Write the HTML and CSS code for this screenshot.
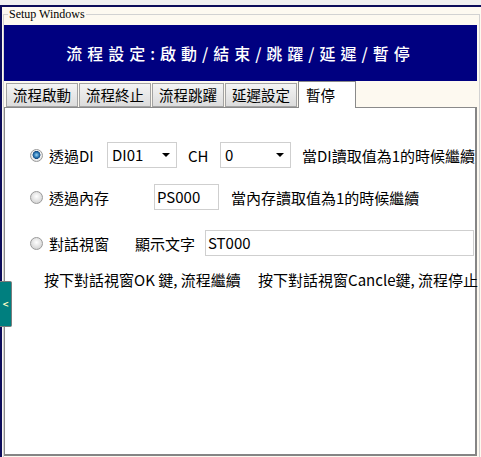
FILE: index.html
```html
<!DOCTYPE html>
<html lang="zh-Hant">
<head>
<meta charset="utf-8">
<title>Setup Windows</title>
<link rel="stylesheet" href="styles.css">
</head>
<body>
<div class="screen">
  <fieldset class="group">
    <legend class="legend">Setup Windows</legend>
    <div class="banner">流程設定:啟動/結束/跳躍/延遲/暫停</div>
    <div class="tabs">
      <div class="tab">流程啟動</div>
      <div class="tab">流程終止</div>
      <div class="tab">流程跳躍</div>
      <div class="tab">延遲設定</div>
      <div class="tab active">暫停</div>
    </div>
    <div class="panel">
      <div class="row row-di">
        <span class="radio checked"></span>
        <span class="lbl lbl-di">透過DI</span>
        <div class="combo combo-di"><span>DI01</span><span class="caret"></span></div>
        <span class="lbl lbl-ch">CH</span>
        <div class="combo combo-ch"><span>0</span><span class="caret"></span></div>
        <span class="note note-di">當DI讀取值為1的時候繼續</span>
      </div>
      <div class="row row-mem">
        <span class="radio"></span>
        <span class="lbl lbl-mem">透過內存</span>
        <div class="field field-ps">PS000</div>
        <span class="note note-mem">當內存讀取值為1的時候繼續</span>
      </div>
      <div class="row row-dlg">
        <span class="radio"></span>
        <span class="lbl lbl-dlg">對話視窗</span>
        <span class="lbl lbl-show">顯示文字</span>
        <div class="field field-st">ST000</div>
      </div>
      <div class="hint">
        <span>按下對話視窗OK 鍵, 流程繼續</span>
        <span class="hint-2">按下對話視窗Cancle鍵, 流程停止</span>
      </div>
    </div>
  </fieldset>
</div>
<div class="side-btn">&lt;</div>
</body>
</html>
```
FILE: styles.css
```css
html, body {
  margin: 0;
  padding: 0;
}
body {
  background: #f0f0f0;
  width: 481px;
  height: 457px;
  overflow: hidden;
  font-family: "Noto Sans CJK TC", "Noto Sans", sans-serif;
  color: #000;
}
.screen {
  margin-top: 5px;
  border-top: 2px solid #0c0c5a;
  border-left: 2px solid #0c0c5a;
  background: #fdf9f0;
  height: 450px;
}
.group {
  margin: 0 0 0 1px;
  padding: 0;
  width: 477px;
  box-sizing: border-box;
  border: 1px solid #d2d2d2;
  border-bottom: none;
  min-inline-size: 0;
  height: 450px;
}
.legend {
  font-family: "Liberation Serif", serif;
  font-size: 12px;
  line-height: 14px;
  padding: 0 1px;
  margin-left: 4px;
}
.banner {
  margin-top: 4px;
  width: 473px;
  height: 56px;
  background: #000080;
  color: #fff;
  display: flex;
  align-items: center;
  justify-content: center;
  font-size: 16px;
  font-weight: 500;
  letter-spacing: 5px;
}
.tabs {
  display: flex;
  align-items: flex-start;
  height: 26px;
  padding-left: 2px;
}
.tab {
  margin-top: 2px;
  height: 24px;
  box-sizing: border-box;
  border: 1px solid #a3a3a3;
  background: linear-gradient(#f4f4f4, #dcdcdc);
  font-size: 14.5px;
  line-height: 22px;
  padding: 0 6px;
  margin-right: 1px;
  white-space: nowrap;
}
.tab.active {
  margin-top: 0;
  height: 27px;
  margin-bottom: -1px;
  background: #fff;
  border-color: #8a8a8a;
  border-bottom: none;
  padding: 2px 20px 0 7px;
  position: relative;
  z-index: 1;
}
.panel {
  width: 473px;
  height: 349px;
  box-sizing: border-box;
  background: #fff;
  border-top: 1px solid #8a8a8a;
  border-left: 1px solid #8a8a8a;
  border-right: 2px solid #858585;
  border-bottom: 2px solid #858585;
  padding-top: 34px;
  font-size: 15px;
}
.row {
  display: flex;
  align-items: center;
  height: 26px;
  padding-left: 25px;
}
.row-mem { margin-top: 16px; }
.row-dlg { margin-top: 20px; }
.radio {
  width: 13px;
  height: 13px;
  box-sizing: border-box;
  border-radius: 50%;
  border: 1px solid #9a9a9a;
  background: radial-gradient(circle at 50% 40%, #ffffff 0%, #e6e6e6 45%, #c8c8c8 100%);
  margin-right: 6px;
  flex: none;
}
.radio.checked {
  background: radial-gradient(circle at 50% 45%, #9fd0ee 0%, #2a7ab8 30%, #184a80 45%, #f2f2f2 52%, #cfcfcf 100%);
}
.lbl { white-space: nowrap; flex: none; }
.lbl-di { width: 58px; }
.lbl-ch { width: 32px; margin-left: 11px; }
.lbl-mem { width: 105px; }
.lbl-dlg { width: 86px; }
.lbl-show { width: 70px; }
.combo {
  height: 26px;
  box-sizing: border-box;
  border: 1px solid #cfcfcf;
  background: #fff;
  display: flex;
  align-items: center;
  justify-content: space-between;
  padding: 0 6px 2px 4px;
  flex: none;
}
.combo-di { width: 70px; }
.combo-ch { width: 71px; }
.caret {
  width: 0;
  height: 0;
  border-left: 4px solid transparent;
  border-right: 4px solid transparent;
  border-top: 4px solid #000;
  margin-top: 2px;
}
.note { white-space: nowrap; margin-left: 11px; }
.note-mem { margin-left: 12px; }
.field {
  height: 26px;
  box-sizing: border-box;
  border: 1px solid #cfcfcf;
  background: #fff;
  padding: 0 0 0 2px;
  line-height: 23px;
  flex: none;
}
.field-ps { width: 65px; }
.field-st { width: 269px; }
.hint {
  margin-top: 14px;
  padding-left: 39px;
  line-height: 20px;
  white-space: nowrap;
}
.hint-2 { margin-left: 14px; }
.side-btn {
  position: absolute;
  left: 0;
  top: 281px;
  width: 12px;
  height: 46px;
  box-sizing: border-box;
  background: #007f7f;
  border: 1px solid #7c7c7c;
  border-left: none;
  border-radius: 0 2px 2px 0;
  color: #ffffc8;
  font-family: "DejaVu Sans", sans-serif;
  font-size: 8px;
  font-weight: bold;
  display: flex;
  align-items: center;
  justify-content: center;
}
```
